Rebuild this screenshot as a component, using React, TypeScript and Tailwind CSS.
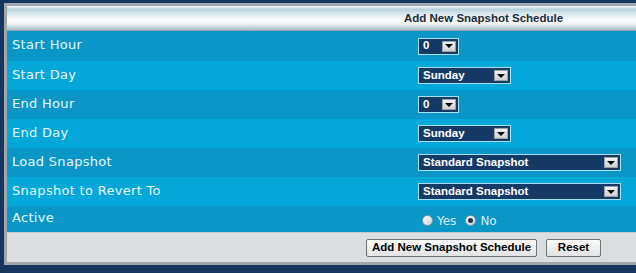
import React from 'react';

const rows = [
  { label: 'Start Hour', kind: 'select', value: '0', width: 'w-[41px]', h: 'h-[30px]', dark: true },
  { label: 'Start Day', kind: 'select', value: 'Sunday', width: 'w-[93px]', h: 'h-[29px]', dark: false },
  { label: 'End Hour', kind: 'select', value: '0', width: 'w-[41px]', h: 'h-[29px]', dark: true },
  { label: 'End Day', kind: 'select', value: 'Sunday', width: 'w-[93px]', h: 'h-[29px]', dark: false },
  { label: 'Load Snapshot', kind: 'select', value: 'Standard Snapshot', width: 'w-[203px]', h: 'h-[29px]', dark: true },
  { label: 'Snapshot to Revert To', kind: 'select', value: 'Standard Snapshot', width: 'w-[203px]', h: 'h-[29px]', dark: false },
  { label: 'Active', kind: 'radio', value: '', width: '', h: 'h-[26px]', dark: true },
];

const boldFont = "font-['Liberation_Sans',Arial,sans-serif] font-bold";

const FakeSelect = ({ value, width }: { value: string; width: string }) => (
  <div className={`${width} h-[17px] flex items-center justify-between bg-[#163a66] border border-[#a6e2f2] pl-[4px] pr-[2px]`}>
    <span className={`${boldFont} text-[11.5px] text-white leading-none whitespace-nowrap`}>{value}</span>
    <span className="w-[14px] h-[11px] flex items-center justify-center bg-gradient-to-b from-[#f2f3f3] to-[#cfd3d4] border border-[#9aa0a4]">
      <svg width="8" height="4" viewBox="0 0 8 4">
        <polygon points="0,0 8,0 4,4" fill="#000" />
      </svg>
    </span>
  </div>
);

const Radio = ({ checked, label }: { checked: boolean; label: string }) => (
  <label className="flex items-center gap-[4px]">
    <span className="w-[11px] h-[11px] rounded-full border border-[#8a9aa4] bg-gradient-to-br from-white to-[#c9d2d6] flex items-center justify-center">
      {checked && <span className="w-[5px] h-[5px] rounded-full bg-[#1c3550]" />}
    </span>
    <span className="text-[12px] text-[#d4f0fa] leading-none pt-[2px]">{label}</span>
  </label>
);

const App = () => {
  return (
    <div className="w-[636px] h-[273px] bg-[#15365e] pl-[4px] pt-[3px] overflow-hidden" style={{ fontFamily: '"DejaVu Sans", Verdana, sans-serif' }}>
      <div className="border-t-[3px] border-l-[3px] border-b-[3px] border-[#a2a6aa] bg-[#dcdfe0]">
        <div className="h-[25px] flex items-center bg-[linear-gradient(to_bottom,#f2f5f6_0%,#b9d3de_14%,#dde9ee_32%,#fbfcfc_55%,#eef3f4_72%,#b4c7d0_92%,#8fa2ac_100%)]">
          <span className={`${boldFont} ml-[397px] text-[11.5px] text-[#1b2a3a] whitespace-nowrap`}>Add New Snapshot Schedule</span>
        </div>
        {rows.map((r) => (
          <div key={r.label} className={`${r.h} grid grid-cols-[411px_1fr] items-center ${r.dark ? 'bg-[#0a97c8]' : 'bg-[#03a7da]'}`}>
            <span className="pl-[5px] pb-[2px] text-[13px] tracking-[0.3px] text-[#e6f7fd]">{r.label}</span>
            <div className="flex items-center">
              {r.kind === 'select' ? (
                <FakeSelect value={r.value} width={r.width} />
              ) : (
                <div className="flex items-center gap-[9px] pl-[4px] pt-[2px]">
                  <Radio checked={false} label="Yes" />
                  <Radio checked={true} label="No" />
                </div>
              )}
            </div>
          </div>
        ))}
        <div className="h-[30px] flex items-center pl-[359px] gap-[9px] border-t border-[#c8ccce]">
          <button className={`${boldFont} h-[18px] w-[171px] rounded-[2px] border border-[#6e7276] bg-gradient-to-b from-[#fbfbfb] to-[#e2e3e4] text-[11.5px] text-black leading-none whitespace-nowrap`}>
            Add New Snapshot Schedule
          </button>
          <button className={`${boldFont} h-[18px] w-[55px] rounded-[2px] border border-[#6e7276] bg-gradient-to-b from-[#fbfbfb] to-[#e2e3e4] text-[11.5px] text-black leading-none whitespace-nowrap`}>
            Reset
          </button>
        </div>
      </div>
    </div>
  );
};

export default App;
